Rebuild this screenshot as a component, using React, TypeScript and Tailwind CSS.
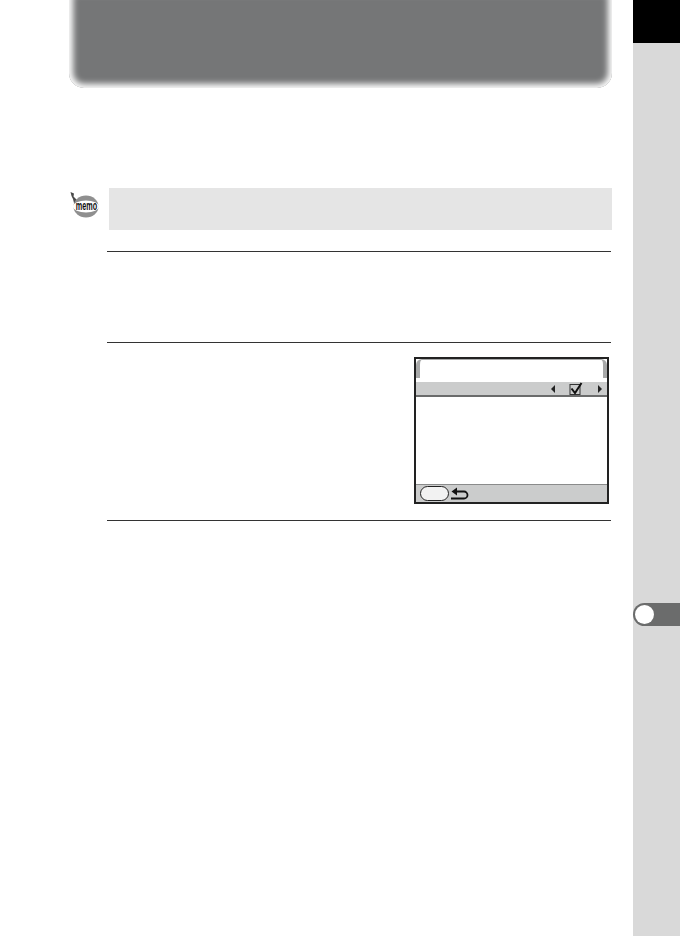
export default function App() {
  return (
    <div className="flex w-[680px] h-[936px] bg-white overflow-hidden" style={{ fontFamily: '"Liberation Sans", sans-serif' }}>
      <main className="w-[633px] shrink-0">
        <div className="-mt-[10px] ml-[69px] w-[543px] h-[98px] rounded-b-[15px] bg-[#757677] shadow-[inset_0_0_6px_4px_#ffffff]" />
        <div className="mt-[100px] flex items-start">
          <svg viewBox="0 0 30 28" className="ml-[69px] mt-[3px] w-[30px] h-[28px] shrink-0">
            <path d="M1.500 1L5 2.500 4.500 5.500 8 9 8 12 5 12 4 8 2.500 5z" fill="#4a4a4a" />
            <ellipse cx="17" cy="15.500" rx="12.500" ry="11" fill="#8f8f8f" />
            <ellipse cx="17" cy="15.500" rx="13" ry="6" fill="#fff" />
            <text transform="translate(17.500 19) scale(0.58 1)" textAnchor="middle" fontSize="12.500" fontWeight="700" fill="#111" fontFamily="Liberation Sans">memo</text>
          </svg>
          <div className="ml-[10px] w-[503px] h-[42px] bg-[#e5e5e5]" />
        </div>
        <div className="ml-[107px] w-[504px]">
          <div className="mt-[21px] h-[91px] border-t border-[#333]" />
          <div className="h-[179px] border-t border-b border-[#333] pt-[14px] flex justify-end">
            <div className="mr-[2px] w-[195px] h-[147px] border-2 border-[#222] bg-white flex flex-col">
              <div className="h-[23px] shrink-0">
                <div className="h-[19px] border-x-[4px] border-t border-[#a8a9a9] rounded-t-[6px]" />
              </div>
              <div className="h-[15px] shrink-0 bg-[#cbcccc] border-b-2 border-[#6a6b6b] flex items-center">
                <span className="ml-[135px] w-0 h-0 border-y-[4px] border-y-transparent border-r-[4px] border-r-[#222]" />
                <svg viewBox="0 0 14 13" className="ml-[14px] w-[14px] h-[13px]">
                  <rect x="1" y="2.500" width="10" height="10" fill="none" stroke="#333" strokeWidth="1" />
                  <path d="M2.500 6.500l3.500 4.500 6.500-10" fill="none" stroke="#111" strokeWidth="2" />
                </svg>
                <span className="ml-[15px] w-0 h-0 border-y-[4px] border-y-transparent border-l-[4px] border-l-[#222]" />
              </div>
              <div className="flex-1" />
              <div className="h-[18px] shrink-0 bg-[#cbcccc] border-t border-[#8a8b8b] flex items-center">
                <div className="ml-[4px] w-[29px] h-[15px] rounded-full border border-[#222] bg-[#f2f2f2]" />
                <svg viewBox="0 0 20 14" className="ml-[1px] w-[20px] h-[14px]">
                  <path d="M5 4.500h9a3.500 3.500 0 0 1 0 7H1" fill="none" stroke="#111" strokeWidth="1.800" />
                  <path d="M7 0.500L1.500 4.500 7 8.500z" fill="#111" />
                </svg>
              </div>
            </div>
          </div>
        </div>
      </main>
      <aside className="flex-1 bg-[#d9d9d9] flex flex-col">
        <div className="h-[43px] bg-black" />
        <div className="mt-[560px] h-[23px] bg-[#6b6c6c] rounded-l-full flex items-center">
          <div className="ml-[2px] w-[19px] h-[19px] rounded-full bg-white" />
        </div>
      </aside>
    </div>
  );
}
